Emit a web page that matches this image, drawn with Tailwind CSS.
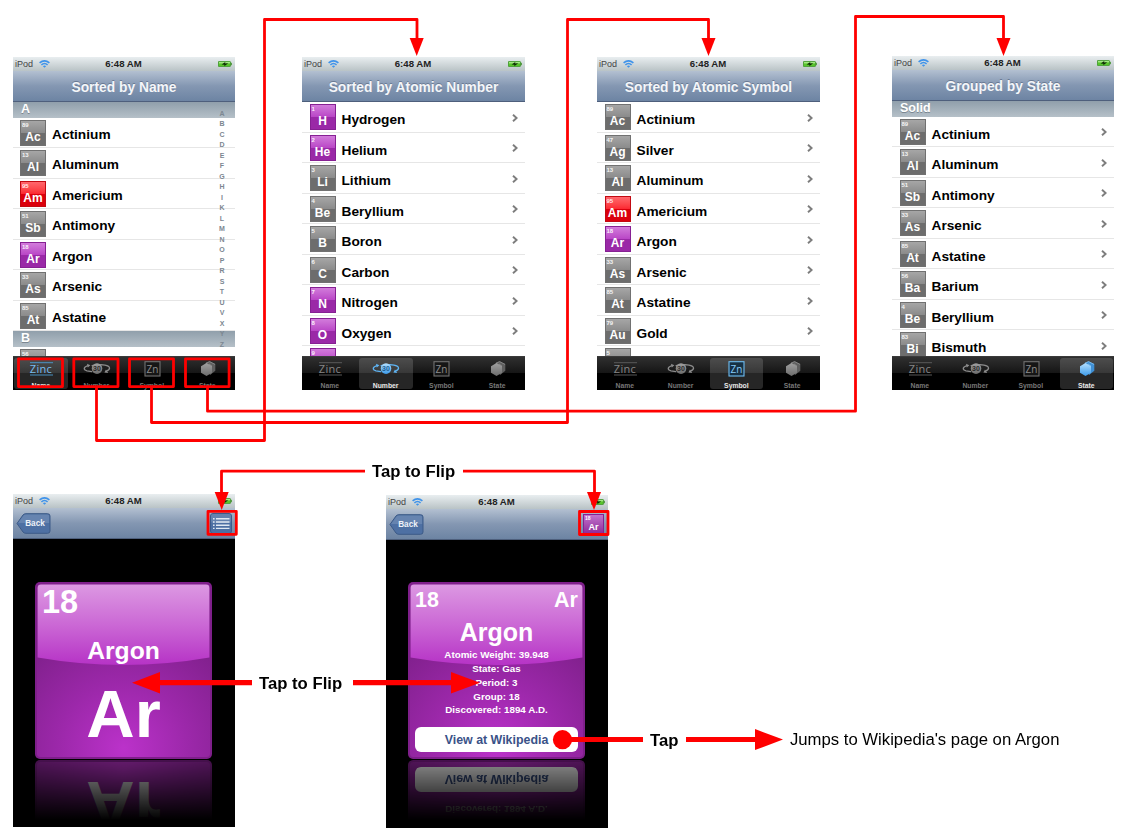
<!DOCTYPE html>
<html lang="en">
<head>
<meta charset="utf-8">
<title>The Elements – navigation map</title>
<script src="https://cdn.jsdelivr.net/npm/@tailwindcss/browser@4"></script>
</head>
<body class="bg-white">
<main id="canvas" class="relative w-[1127px] h-[840px] overflow-hidden bg-white font-['Liberation_Sans',Arial,sans-serif] text-black"></main>

<svg width="0" height="0" class="absolute">
  <defs>
    <linearGradient id="gloss" x1="0" y1="0" x2="0" y2="1"><stop offset="0" stop-color="#dc98e2"/><stop offset=".5" stop-color="#cb68d5"/><stop offset="1" stop-color="#b633c6"/></linearGradient>
    <radialGradient id="glow" cx=".5" cy=".95" r=".75"><stop offset="0" stop-color="#bb32ca"/><stop offset=".5" stop-color="#9c28aa"/><stop offset="1" stop-color="#80208c"/></radialGradient>
    <linearGradient id="blue" x1="0" y1="0" x2="0" y2="1"><stop offset="0" stop-color="#b5e0ff"/><stop offset="1" stop-color="#3c9bea"/></linearGradient>
    <linearGradient id="grey" x1="0" y1="0" x2="0" y2="1"><stop offset="0" stop-color="#a0a0a0"/><stop offset="1" stop-color="#6c6c6c"/></linearGradient>
  </defs>
</svg>

<script>
const status = () => `
  <div class="relative flex h-[14px] shrink-0 items-center justify-between bg-linear-to-b from-[#e9eef0] to-[#b9c3c6] pl-[2px] pr-[3px]">
    <div class="flex items-center gap-[6px]">
      <span class="text-[9px] leading-[14px] text-[#444]">iPod</span>
      <svg class="h-[8px] w-[11px]" viewBox="0 0 11 8" fill="none" stroke="#3f93ea" stroke-width="1.6"><path d="M.6 2.9Q5.5-1.2 10.4 2.9M2.4 4.8Q5.5 2.2 8.6 4.8"/><path d="M3.9 6.2Q5.5 4.9 7.1 6.2L5.5 7.8Z" fill="#3f93ea" stroke="none"/></svg>
    </div>
    <span class="absolute inset-x-0 text-center text-[9.6px] font-bold leading-[14px] text-[#222] pr-[1px]">6:48 AM</span>
    <svg class="h-[6px] w-[14px]" viewBox="0 0 14 6"><rect x=".4" y=".4" width="12" height="5.2" rx=".6" fill="#58c52c" stroke="#2f8a1d" stroke-width=".7"/><rect x="1" y="1" width="11" height="1.4" fill="#a5e886"/><rect x="12.6" y="1.8" width="1.2" height="2.4" fill="#3f8f2a"/><path d="M3.6 3.6 7.4 1 7 2.4 10.2 2.3 6.2 5.2 6.6 3.8Z" fill="#0b2405"/></svg>
  </div>`;

const nav = (inner, cls) => `<div class="flex h-[31px] shrink-0 items-center border-b border-[#4e5f7c] bg-linear-to-b from-[#b3c0d1] via-[#8497b2] to-[#6d84a3] ${cls}">${inner}</div>`;
const title = t => nav(`<span class="pt-[4px] text-[13.8px] leading-[20px] font-bold text-[#f4f6f9] whitespace-nowrap [text-shadow:0_-1px_0_#6a7a93]">${t}</span>`, 'justify-center');
const section = t => `<div class="flex h-[15.5px] shrink-0 items-center bg-linear-to-b from-[#909fab] to-[#b5c0c8] pl-[8px] text-[12.5px] font-bold leading-[15px] text-white [text-shadow:0_1px_0_#7b8791]">${t}</div>`;

const tones = {
  g: 'border-[#717171] from-[#a6a6a6] via-[#8b8b8b] to-[#6d6d6d]',
  p: 'border-[#862093] from-[#d27bdb] via-[#b945c6] to-[#9a29a7]',
  r: 'border-[#c20a12] from-[#ff666c] via-[#fb2530] to-[#db000c]'
};
const tile = (n, s, c) => `
  <div class="mt-[1px] flex h-[26px] w-[26px] shrink-0 flex-col border bg-linear-to-b via-50% to-50% ${tones[c]} text-white">
    <span class="h-[8px] pl-[1px] text-[6px] font-bold leading-[8px] opacity-90">${n}</span>
    <span class="text-center text-[12px] font-bold leading-[17px]">${s}</span>
  </div>`;
const chevron = `<svg class="mt-[2px] ml-auto mr-[7.5px] h-[8px] w-[6px]" viewBox="0 0 6 8" fill="none" stroke="#7d7d7d" stroke-width="1.9"><path d="M1 .7 4.6 4 1 7.3"/></svg>`;
const row = ([n, s, name, c = 'g'], arrow) => `
  <div class="flex h-[30.5px] shrink-0 items-center border-b border-[#e6e6e6] ${arrow ? 'pl-[7.5px]' : 'pl-[7px]'}">
    ${tile(n, s, c)}
    <span class="ml-[6px] text-[13.7px] font-bold leading-[16px] ${arrow ? 'mt-[7px]' : 'mt-[5px]'}">${name}</span>
    ${arrow && name ? chevron : ''}
  </div>`;

const icons = {
  Name: on => `<svg class="h-[16px] w-[24px]" viewBox="0 0 24 16"><path d="M1 1.7H24M1 14H24" stroke="${on ? '#4d9bd0' : '#606060'}" stroke-width=".9"/><text x="12" y="12" text-anchor="middle" font-family="Open Sans, sans-serif" font-size="11" letter-spacing=".3" fill="${on ? '#78bdf0' : '#868686'}">Zinc</text></svg>`,
  Number: on => `<svg class="h-[16px] w-[28px]" viewBox="0 0 28 16"><g fill="none" stroke="${on ? '#5fb4f3' : '#8c8c8c'}" stroke-width="1.3"><path d="M5 4.6C.2 6 .2 9 4 9.8L9 10.6M8.6 4.6 18 3.6 22 4.2C28 5.4 27.6 8.4 23.4 10.2"/></g><path d="M4 2.8 7.4 4.2 4.8 6.6ZM25.2 12 21.4 11.4 23 8.4Z" fill="${on ? '#5fb4f3' : '#8c8c8c'}"/><circle cx="14" cy="7.6" r="5.3" fill="url(#${on ? 'blue' : 'grey'})"/><text x="14" y="10.2" text-anchor="middle" font-family="Liberation Sans" font-size="7" font-weight="bold" fill="${on ? '#1f5f95' : '#2c2c2c'}">30</text></svg>`,
  Symbol: on => `<svg class="h-[16px] w-[17px]" viewBox="0 0 17 16"><rect x="1" y=".7" width="15" height="14.3" fill="${on ? '#163044' : '#161616'}" stroke="${on ? '#6dbcf0' : '#727272'}" stroke-width="1.1"/><text x="8.5" y="11.8" text-anchor="middle" font-family="Open Sans, sans-serif" font-size="10" fill="${on ? '#86c9f8' : '#8d8d8d'}">Zn</text></svg>`,
  State: on => `<svg class="h-[16px] w-[16px]" viewBox="0 0 16 16"><path d="M5.5 2.2 9.5 .3 15.3 3V9.8L10 14Z" fill="${on ? '#3f8fd4' : '#5f5f5f'}"/><path d="M1 5.2 6.5 2 12 5.2V11.8L6.5 15 1 11.8Z" fill="url(#${on ? 'blue' : 'grey'})"/><path d="M6 2 9.7 .6 15 3.4M12 5.2 9 2.9" fill="none" stroke="${on ? '#9bd6ff' : '#a5a5a5'}" stroke-width=".6"/></svg>`
};
const tabs = active => `
  <div class="grid h-[34px] shrink-0 grid-cols-4 border-t border-[#3a3a3a] bg-linear-to-b from-[#303030] from-0% via-[#151515] via-50% to-black to-50%">
    ${Object.keys(icons).map(k => `
    <div class="m-[1px] flex h-[31px] flex-col items-center rounded-[3px] pt-[3px] pl-[1px] ${k === active ? 'bg-white/15 text-[#e8e8e8]' : 'text-[#777]'}">
      ${icons[k](k === active)}
      <span class="mt-[4px] -mb-[2px] pr-[1px] text-[6.8px] font-bold leading-[9px]">${k}</span>
    </div>`).join('')}
  </div>`;

const phone = (pos, inner) => `<section class="absolute flex flex-col overflow-hidden ${pos}">${inner}</section>`;
const list = inner => `<div class="relative flex min-h-0 flex-1 flex-col overflow-hidden bg-white">${inner}</div>`;

const E = {
  Ac: [89, 'Ac', 'Actinium'], Al: [13, 'Al', 'Aluminum'], Am: [95, 'Am', 'Americium', 'r'], Sb: [51, 'Sb', 'Antimony'],
  Ar: [18, 'Ar', 'Argon', 'p'], As: [33, 'As', 'Arsenic'], At: [85, 'At', 'Astatine'], Ba: [56, 'Ba', 'Barium'],
  H: [1, 'H', 'Hydrogen', 'p'], He: [2, 'He', 'Helium', 'p'], Li: [3, 'Li', 'Lithium'], Be: [4, 'Be', 'Beryllium'],
  B: [5, 'B', 'Boron'], C: [6, 'C', 'Carbon'], N: [7, 'N', 'Nitrogen', 'p'], O: [8, 'O', 'Oxygen', 'p'],
  Ag: [47, 'Ag', 'Silver'], Au: [79, 'Au', 'Gold'], Bi: [83, 'Bi', 'Bismuth'],
  F: [9, '', '', 'p'], cutBa: [56, '', ''], cutB: [5, '', '']
};
const rows = (keys, arrow) => keys.split(' ').map(k => row(E[k], arrow)).join('');

const index = `<div class="absolute right-[8px] top-[7px] flex w-[10px] flex-col items-center text-[7px] font-bold leading-[10.48px] text-[#7c8791]">${[...'ABCDEFGHIKLMNOPRSTUVXYZ'].map(l => `<span>${l}</span>`).join('')}</div>`;

/* Large element card: glossy square with its mirrored reflection below */
const cardBg = `<svg class="absolute inset-0 h-full w-full" viewBox="0 0 177 177"><rect width="177" height="177" rx="5" fill="#7f1f8b"/><rect x="2" y="2" width="173" height="173" rx="3.5" fill="url(#glow)"/><path d="M2.6 75.5V6Q2.6 2.6 6 2.6H171Q174.4 2.6 174.4 6V75.5Q88.5 90.5 2.6 75.5Z" fill="url(#gloss)"/></svg>`;
const front = top => `<div class="relative flex h-[177px] w-[177px] flex-col text-white font-bold">${cardBg}
  <span class="relative ml-[7px] mt-[3px] h-[34px] text-[32.5px] leading-[34px]">${top ? '18' : ''}</span>
  <span class="relative mt-[17px] h-[30px] text-center text-[24.7px] leading-[30px]">${top ? 'Argon' : ''}</span>
  <span class="relative mt-[11px] text-center text-[67px] leading-[74px]">Ar</span></div>`;
const facts = ['Atomic Weight: 39.948', 'State: Gas', 'Period: 3', 'Group: 18', 'Discovered: 1894 A.D.'];
const back = top => `<div class="relative flex h-[177px] w-[177px] flex-col text-white font-bold">${cardBg}
  <div class="relative flex h-[30px] justify-between pl-[7px] pr-[7px] pt-[5px] text-[21.5px] leading-[26px]"><span>${top ? '18' : ''}</span><span>${top ? 'Ar' : ''}</span></div>
  <span class="relative mt-[5px] h-[30px] text-center text-[25px] leading-[30px]">${top ? 'Argon' : ''}</span>
  <div class="relative mt-[1px] text-center text-[9.8px] leading-[13.85px]">${facts.map((t, i) => `<div class="h-[13.85px]">${top || i === 4 ? t : ''}</div>`).join('')}</div>
  <div class="relative mx-[7px] mt-[10px] h-[25px] rounded-[6px] bg-white text-center text-[12.4px] leading-[26px] text-[#3a5288]">View at Wikipedia</div></div>`;
const backBtn = `<div class="relative ml-[3px] h-[21px] w-[35px]"><svg class="absolute inset-0" width="35" height="21" viewBox="0 0 35 21"><path d="M1 10.5 7 2Q8 .7 10 .7H31.5Q34 .7 34 3V18Q34 20.3 31.5 20.3H10Q8 20.3 7 19Z" fill="#4e70a3" stroke="#3c5a87" stroke-width="1"/><path d="M2 10 7.5 2.5Q8 1.5 10 1.5H31.5Q33.2 1.5 33.2 3V10Z" fill="#7d97bd" opacity=".5"/></svg><span class="relative block pl-[3px] text-center text-[8.2px] font-bold leading-[21px] text-[#eef2f8]">Back</span></div>`;
const listBtn = `<svg class="ml-auto mr-[3px] h-[21px] w-[22px]" viewBox="0 0 22 21"><rect x=".5" y=".5" width="21" height="20" rx="2.5" fill="#4d6fa3" stroke="#3c5b8c"/><rect x="1" y="1" width="20" height="9" rx="2" fill="#7590b8" opacity=".6"/><path d="M6 5.7H19.5M6 9H19.5M6 12.2H19.5M6 15.4H19.5" stroke="#dfe7f2" stroke-width="1.4"/><path d="M3 5.7H4.6M3 9H4.6M3 12.2H4.6M3 15.4H4.6" stroke="#dfe7f2" stroke-width="1.4"/></svg>`;
const arBtn = `<div class="ml-auto mr-[4px] flex h-[21px] w-[21px] flex-col border border-[#862093] bg-linear-to-b from-[#c273cc] to-[#8c2698] font-bold text-white"><span class="h-[6px] pl-[1px] text-[5px] leading-[7px]">18</span><span class="text-center text-[9px] leading-[13px]">Ar</span></div>`;
const stage = (card, cls) => `<div class="flex min-h-0 flex-1 flex-col overflow-hidden bg-black ${cls}">
  ${card(true)}
  <div class="relative mt-px h-[60px] w-[177px] overflow-hidden"><div class="-scale-y-100">${card(false)}</div><div class="absolute inset-0 bg-linear-to-b from-black/45 to-black"></div></div>
</div>`;

/* Red connector layer */
const head = (x, y) => `<path d="M${x - 7} ${y - 18}H${x + 7}L${x} ${y}Z"/>`;
const flow = `<svg class="absolute inset-0" width="1127" height="840" viewBox="0 0 1127 840">
  <g fill="none" stroke="#f00" stroke-width="2.8" stroke-linejoin="round">
    <rect x="18.5" y="358.8" width="44" height="27.8"/><rect x="73.8" y="358.8" width="44.2" height="27.8"/><rect x="129.5" y="358.8" width="44" height="27.8"/><rect x="185.5" y="358.8" width="43.6" height="27.8"/>
    <path d="M96.5 388V440.5H264.5V19.5H417V40"/>
    <path d="M151.5 388V422.5H567.5V19.5H708.5V40"/>
    <path d="M207.5 388V411.2H855.5V16.5H1003.5V40"/>
    <path d="M365 471.2H221.5V494M463 471.2H594.5V494"/>
    <rect x="208" y="511.3" width="28.3" height="23"/><rect x="579.5" y="511.5" width="28.5" height="23"/>
    <path stroke-width="5.2" d="M158 682.7H252M353 682.7H453M562 739.5H643M686 739.5H757"/>
  </g>
  <g fill="#f00">${head(416.7, 56)}${head(708.5, 56)}${head(1003.5, 56)}${head(221.7, 510)}${head(594, 510)}
    <path d="M132 682.7 160 672V693.4ZM480 682.7 451 672V693.4ZM783 739.5 755 729V750Z"/><circle cx="562.5" cy="739.7" r="9.6"/></g>
</svg>`;
const label = (pos, t) => `<p class="absolute whitespace-nowrap leading-[20px] ${pos}">${t}</p>`;

document.getElementById('canvas').innerHTML =
  phone('left-[13px] top-[57px] h-[333px] w-[222px]', status() + title('Sorted by Name') + list(section('A') + rows('Ac Al Am Sb Ar As At') + section('B') + rows('cutBa') + index) + tabs('Name')) +
  phone('left-[302px] top-[57px] h-[333px] w-[223px]', status() + title('Sorted by Atomic Number') + list(rows('H He Li Be B C N O F', true)) + tabs('Number')) +
  phone('left-[597px] top-[57px] h-[333px] w-[223px]', status() + title('Sorted by Atomic Symbol') + list(rows('Ac Ag Al Am Ar As At Au cutB', true)) + tabs('Symbol')) +
  phone('left-[892px] top-[56px] h-[334px] w-[222px]', status() + title('Grouped by State') + list(section('Solid') + rows('Ac Al Sb As At Ba Be Bi', true)) + tabs('State')) +
  phone('left-[13px] top-[494px] h-[333px] w-[222px]', status() + nav(backBtn + listBtn, '') + stage(front, 'pl-[22px] pt-[43px]')) +
  phone('left-[386px] top-[495px] h-[333px] w-[222px]', status() + nav(backBtn + arBtn, '') + stage(back, 'pl-[22px] pt-[42px]')) +
  flow +
  label('left-[372px] top-[462px] text-[16.7px] font-bold', 'Tap to Flip') +
  label('left-[259px] top-[674px] text-[16.7px] font-bold', 'Tap to Flip') +
  label('left-[650px] top-[731px] text-[16.7px] font-bold', 'Tap') +
  label('left-[790px] top-[730px] text-[16.7px]', "Jumps to Wikipedia's page on Argon");
</script>
</body>
</html>
